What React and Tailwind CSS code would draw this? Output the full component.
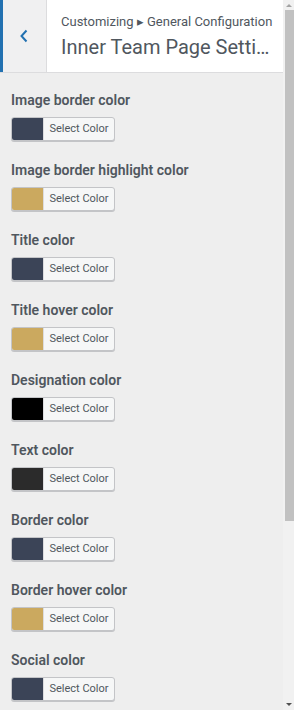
import React from 'react';

const items = [
    { label: 'Image border color', color: '#3b4457' },
    { label: 'Image border highlight color', color: '#cba95f' },
    { label: 'Title color', color: '#3b4457' },
    { label: 'Title hover color', color: '#cba95f' },
    { label: 'Designation color', color: '#000000' },
    { label: 'Text color', color: '#2b2b2b' },
    { label: 'Border color', color: '#3b4457' },
    { label: 'Border hover color', color: '#cba95f' },
    { label: 'Social color', color: '#3b4457' },
];

const ColorControl = ({ label, color }) => (
    <div className="flex flex-col">
        <span className="text-[14px] leading-[20px] font-semibold text-[#50575e]">{label}</span>
        <button className="mt-[7px] flex h-[24px] w-[104px] items-stretch overflow-hidden rounded-[3px] border border-[#c3c4c7] bg-[#f6f7f7] p-0 shadow-[0_1px_0_#c3c4c7]">
            <span className="w-[31px] shrink-0" style={{ backgroundColor: color }} />
            <span className="flex flex-1 items-center justify-center border-l border-[#dcdcde] text-[11px] text-[#50575e]">
                Select Color
            </span>
        </button>
    </div>
);

export default function App() {
    return (
        <div className="flex h-[710px] w-[294px] overflow-hidden bg-[#eeeeee] font-['Roboto','Liberation_Sans',sans-serif]">
            {/* 主內容 */}
            <div className="flex min-w-0 flex-1 flex-col">
                <div className="flex h-[73px] shrink-0 border-b border-[#dcdcde] bg-white">
                    <div className="w-[3px] bg-[#2271b1]" />
                    <div className="flex w-[44px] items-center justify-center border-r border-[#dcdcde] bg-[#f0f0f1]">
                        <svg width="10" height="14" viewBox="0 0 10 14" className="-ml-[2px]">
                            <path d="M7.5 1.5 L2.5 7 L7.5 12.5" fill="none" stroke="#2271b1" strokeWidth="2" />
                        </svg>
                    </div>
                    <div className="flex min-w-0 flex-1 flex-col pl-[14px] pt-[12px]">
                        <span className="text-[13px] leading-[20px] text-[#50575e] whitespace-nowrap">
                            Customizing ▸ General Configuration
                        </span>
                        <span className="truncate pr-[12px] text-[20px] leading-[30px] text-[#50575e]">
                            Inner Team Page Settings
                        </span>
                    </div>
                </div>
                <div className="flex flex-col gap-[19px] pl-[11px] pt-[17px]">
                    {items.map(item => (
                        <ColorControl key={item.label} {...item} />
                    ))}
                </div>
            </div>

            {/* 捲軸 */}
            <div className="flex w-[11px] shrink-0 flex-col bg-[#f1f1f1]">
                <div className="flex h-[10px] items-center justify-center">
                    <div className="h-0 w-0 border-x-[3px] border-b-[3px] border-x-transparent border-b-[#a3a3a3]" />
                </div>
                <div className="ml-[2px] h-[511px] bg-[#c1c1c1]" />
                <div className="flex-1" />
                <div className="flex h-[12px] items-center justify-center">
                    <div className="h-0 w-0 border-x-[3px] border-t-[3px] border-x-transparent border-t-[#505050]" />
                </div>
            </div>
        </div>
    );
}
